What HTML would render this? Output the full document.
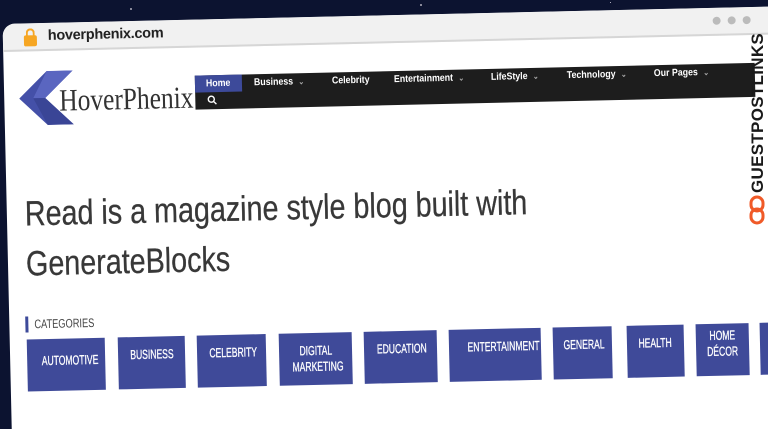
<!DOCTYPE html>
<html style="overflow:hidden;width:768px;height:429px"><head><meta charset="utf-8"><style>
*{margin:0;padding:0;box-sizing:border-box}
html,body{width:768px;height:429px;overflow:hidden}
body{background:#0c1330;position:relative;font-family:"Liberation Sans",sans-serif}
.clip{position:absolute;left:0;top:0;width:768px;height:429px;overflow:hidden}
.frame{position:absolute;left:0;top:0;width:790px;height:450px;transform:rotate(-1.3deg);transform-origin:0 0}
.win{position:absolute;left:2px;top:24px;width:788px;height:426px;background:#fff;border-radius:12px 12px 0 0;overflow:hidden}
.bar{position:absolute;left:0;top:0;width:100%;height:28px;background:#f1f1f1;border-bottom:2px solid #d6d6d6}
.url{position:absolute;left:45px;top:5px;font-size:14.5px;color:#222;font-weight:bold;letter-spacing:-.3px}
.lock{position:absolute;left:21px;top:12px;width:13px;height:11px;background:#f6a623;border-radius:2px}
.lock:before{content:"";position:absolute;left:2px;top:-7px;width:5px;height:7px;border:2px solid #f6a623;border-bottom:none;border-radius:5px 5px 0 0}
.dot{position:absolute;top:9px;width:8px;height:8px;border-radius:50%;background:#bbb}
.logotxt{position:absolute;left:57px;top:84px;font-family:"Liberation Serif",serif;font-size:31px;color:#333;transform:scaleX(.82);transform-origin:0 0;white-space:nowrap}
.nav{position:absolute;left:193px;top:80px;width:560px;height:34px;background:#1d1d1d}
.home{position:absolute;left:0;top:0;width:47px;height:17px;background:#3d4a9a}
.ni{position:absolute;top:3px;font-size:10px;font-weight:bold;color:#fff;white-space:nowrap;transform:scaleX(.88);transform-origin:0 0}
.ni small{font-size:8px;color:#aaa;margin-left:6px}
.sx{display:inline-block;transform:scaleX(.74);transform-origin:0 0;white-space:nowrap}
h1{position:absolute;left:20px;top:190px;font-weight:normal;font-size:35px;line-height:50px;color:#383838;white-space:nowrap;transform:scaleX(.82);transform-origin:0 0;-webkit-text-stroke:.3px #383838}
.cat{position:absolute;left:18px;top:317px;border-left:3px solid #3d4a9a;padding-left:6px;font-size:12.5px;line-height:16px;color:#444;width:120px}
.b{position:absolute;top:340px;height:52px;background:#3f4a99;color:#fff;font-size:13px;text-align:center;padding-top:10px;line-height:16px;-webkit-text-stroke:.3px #fff}
.b span{display:inline-block;transform:scaleX(.66);white-space:nowrap}
.gp{position:absolute;z-index:5;left:748px;top:193px;transform:rotate(-90deg);transform-origin:0 0;font-weight:900;font-size:17px;color:#1a1a1a;letter-spacing:.3px;white-space:nowrap}
</style></head><body>
<div class="clip">
<div style="position:absolute;left:130px;top:8px;width:2px;height:2px;background:#889"></div>
<div style="position:absolute;left:420px;top:4px;width:2px;height:2px;background:#889"></div>
<div style="position:absolute;left:610px;top:2px;width:1px;height:1px;background:#aab"></div>
<div class="frame">
<div class="win">
 <div class="bar"><div class="lock"></div><div class="url">hoverphenix.com</div>
 <div class="dot" style="left:710px"></div><div class="dot" style="left:725px"></div><div class="dot" style="left:740px"></div></div>
</div>
<svg style="position:absolute;left:17px;top:72px" width="56" height="54" viewBox="0 0 56 54">
<polygon points="28,0 54,0 26,27 54,54 28,54 0,27" fill="#4450a8"/>
<polygon points="28,0 54,0 26,27 14,27" fill="#5a66c0"/>
<polygon points="14,27 26,27 54,54 28,54" fill="#3a4596"/>
</svg>
<div class="logotxt">HoverPhenix</div>
<div class="nav">
 <div class="home"></div>
 <div class="ni" style="left:11px">Home</div>
 <div class="ni" style="left:59px">Business<small>⌄</small></div>
 <div class="ni" style="left:137px">Celebrity</div>
 <div class="ni" style="left:199px">Entertainment<small>⌄</small></div>
 <div class="ni" style="left:296px">LifeStyle<small>⌄</small></div>
 <div class="ni" style="left:372px">Technology<small>⌄</small></div>
 <div class="ni" style="left:459px">Our Pages<small>⌄</small></div>
 <svg style="position:absolute;left:12px;top:20px" width="10" height="10" viewBox="0 0 10 10"><circle cx="4" cy="4" r="3" stroke="#fff" stroke-width="1.4" fill="none"/><line x1="6.2" y1="6.2" x2="9" y2="9" stroke="#fff" stroke-width="1.4"/></svg>
</div>
<h1>Read is a magazine style blog built with<br>GenerateBlocks</h1>
<div class="cat"><span class="sx">CATEGORIES</span></div>
<div class="b" style="left:19px;width:78px;padding-top:14px"><span>AUTOMOTIVE</span></div>
<div class="b" style="left:110px;width:67px"><span>BUSINESS</span></div>
<div class="b" style="left:189px;width:69px"><span>CELEBRITY</span></div>
<div class="b" style="left:271px;width:73px"><span>DIGITAL</span><br><span>MARKETING</span></div>
<div class="b" style="left:356px;width:73px"><span>EDUCATION</span></div>
<div class="b" style="left:441px;width:92px"><span>ENTERTAINMENT</span></div>
<div class="b" style="left:545px;width:59px"><span>GENERAL</span></div>
<div class="b" style="left:619px;width:57px"><span>HEALTH</span></div>
<div class="b" style="left:688px;width:53px;padding-top:4px"><span>HOME</span><br><span>DÉCOR</span></div>
<div class="b" style="left:752px;width:38px"></div>
</div>
<div class="gp">GUESTPOSTLINKS</div>
<svg style="position:absolute;z-index:5;left:748px;top:195px" width="18" height="30" viewBox="0 0 18 30"><rect x="3" y="2" width="12" height="14" rx="6" fill="none" stroke="#f05a28" stroke-width="3"/><rect x="3" y="14" width="12" height="14" rx="6" fill="none" stroke="#f05a28" stroke-width="3"/></svg>
</div>
</body></html>
